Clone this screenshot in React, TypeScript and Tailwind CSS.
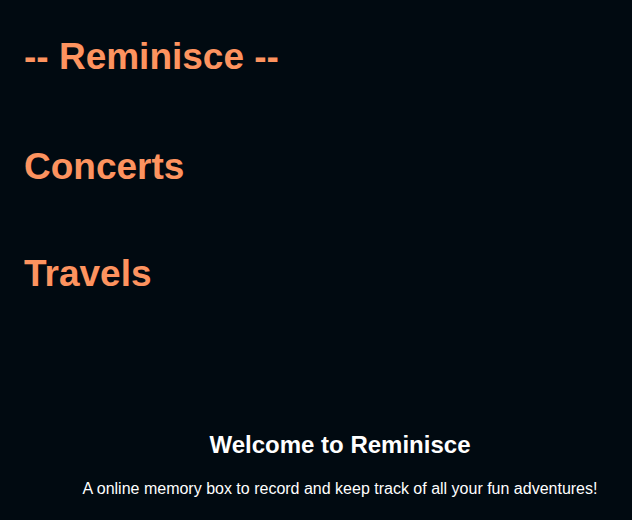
import React from 'react';

const links = ['Concerts', 'Travels'];

const App: React.FC = () => {
  return (
    <div className="min-h-[520px] w-full bg-[#010a11] font-['Liberation_Sans',Arial,sans-serif]">
      <div className="flex flex-col px-[24px] pt-[36px]">
        <h1 className="text-[37px] font-bold leading-[41px] text-[#fd935f]">-- Reminisce --</h1>
        <nav className="mt-[69px] flex flex-col gap-[66px]">
          {links.map(link => (
            <h1 key={link} className="text-[37px] font-bold leading-[41px] text-[#fd935f]">
              {link}
            </h1>
          ))}
        </nav>
        <div className="mt-[137px] flex flex-col items-center pl-[48px]">
          <h2 className="text-[24px] font-bold leading-[28px] text-white">Welcome to Reminisce</h2>
          <p className="mt-[21px] text-[16px] leading-[18px] text-white">
            A online memory box to record and keep track of all your fun adventures!
          </p>
        </div>
      </div>
    </div>
  );
};

export default App;
